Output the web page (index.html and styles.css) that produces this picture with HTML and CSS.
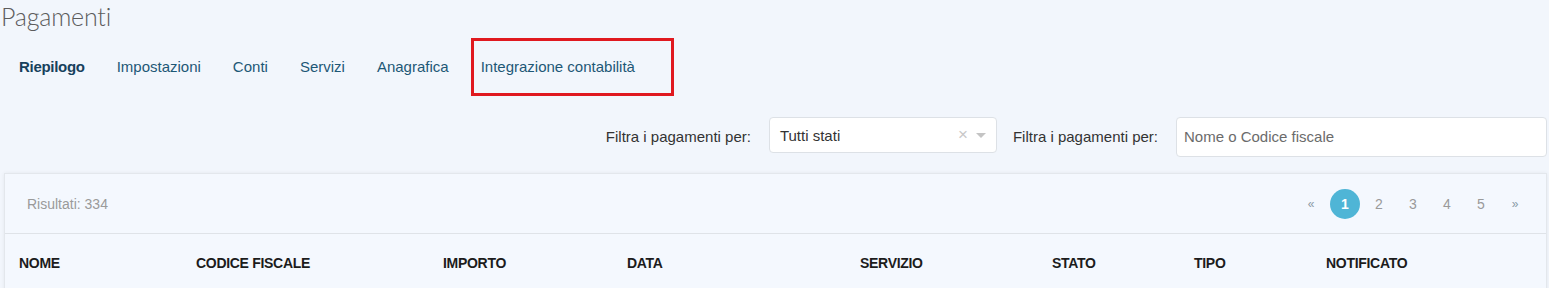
FILE: index.html
```html
<!DOCTYPE html>
<html lang="it">
<head>
<meta charset="utf-8">
<title>Pagamenti</title>
<link rel="stylesheet" href="styles.css">
</head>
<body>
<div class="page">
  <h1 class="title">Pagamenti</h1>
  <nav class="tabs">
    <a class="tab active">Riepilogo</a>
    <a class="tab">Impostazioni</a>
    <a class="tab">Conti</a>
    <a class="tab">Servizi</a>
    <a class="tab">Anagrafica</a>
    <a class="tab highlighted">Integrazione contabilità</a>
  </nav>
  <div class="filters">
    <label class="filter-label">Filtra i pagamenti per:</label>
    <div class="select">
      <span class="select-value">Tutti stati</span>
      <span class="select-clear">×</span>
      <span class="select-arrow"></span>
    </div>
    <label class="filter-label second">Filtra i pagamenti per:</label>
    <div class="input"><span class="placeholder">Nome o Codice fiscale</span></div>
  </div>
  <section class="card">
    <div class="card-head">
      <span class="results">Risultati: 334</span>
      <ul class="pager">
        <li class="arrow">«</li>
        <li class="current">1</li>
        <li>2</li>
        <li>3</li>
        <li>4</li>
        <li>5</li>
        <li class="arrow">»</li>
      </ul>
    </div>
    <table class="grid">
      <colgroup>
        <col class="c1"><col class="c2"><col class="c3"><col class="c4"><col class="c5"><col class="c6"><col class="c7"><col class="c8">
      </colgroup>
      <thead>
        <tr>
          <th>NOME</th><th>CODICE FISCALE</th><th>IMPORTO</th><th>DATA</th><th>SERVIZIO</th><th>STATO</th><th>TIPO</th><th>NOTIFICATO</th>
        </tr>
      </thead>
    </table>
  </section>
</div>
</body>
</html>
```
FILE: styles.css
```css
html, body {
  margin: 0;
  padding: 0;
  background: #f2f6fc;
  font-family: "Liberation Sans", Arial, sans-serif;
  color: #333;
}
.page {
  padding: 0 2px 0 3px;
}
.title {
  margin: 0 0 0 -2px;
  padding: 2px 0 0 0;
  height: 35px;
  font-family: Lato, "Liberation Sans", sans-serif;
  font-weight: 300;
  font-size: 25px;
  line-height: 28px;
  color: #5c5c5c;
  letter-spacing: -0.2px;
}
.tabs {
  display: flex;
  align-items: center;
  height: 60px;
}
.tab {
  font-size: 15px;
  color: #1e5876;
  padding: 0 16px;
  line-height: 20px;
}
.tab.active {
  font-weight: bold;
  color: #17415c;
  letter-spacing: -0.3px;
}
.tab.highlighted {
  margin-left: 6px;
  padding: 16px 36px 16px 7px;
  border: 3px solid #e0191f;
}
.filters {
  display: flex;
  justify-content: flex-end;
  align-items: center;
  margin-top: 20px;
  height: 39px;
}
.filter-label {
  font-size: 15px;
  color: #333;
  margin-right: 18px;
}
.filter-label.second {
  margin-left: 16px;
}
.select {
  box-sizing: border-box;
  width: 228px;
  height: 36px;
  background: #fff;
  border: 1px solid #dde1e6;
  border-radius: 4px;
  display: flex;
  align-items: center;
  padding: 0 10px;
  align-self: flex-start;
}
.select-value {
  flex: 1;
  font-size: 15px;
  color: #333;
}
.select-clear {
  color: #c8c8c8;
  font-size: 17px;
  margin-right: 8px;
}
.select-arrow {
  width: 0;
  height: 0;
  border-left: 5px solid transparent;
  border-right: 5px solid transparent;
  border-top: 5px solid #c4c4c4;
}
.input {
  box-sizing: border-box;
  width: 371px;
  height: 40px;
  background: #fff;
  border: 1px solid #dde1e6;
  border-radius: 4px;
  display: flex;
  align-items: center;
  padding: 0 7px;
}
.placeholder {
  font-size: 15px;
  color: #6b6b6b;
}
.card {
  margin: 17px 0 0 1px;
  background: #f4f8fe;
  border: 1px solid #e3e7ec;
  box-shadow: 0 0 4px rgba(0, 0, 0, 0.06);
}
.card-head {
  display: flex;
  justify-content: space-between;
  align-items: center;
  height: 58px;
  padding: 1px 16px 0 22px;
  border-bottom: 1px solid #dfe3e8;
}
.results {
  font-size: 14px;
  color: #9a9a9a;
}
.pager {
  display: flex;
  align-items: center;
  list-style: none;
  margin: 0;
  padding: 0;
  gap: 4px;
}
.pager li {
  width: 30px;
  height: 30px;
  border-radius: 50%;
  display: flex;
  align-items: center;
  justify-content: center;
  font-size: 14px;
  color: #9a9a9a;
}
.pager li.arrow {
  font-size: 12px;
  color: #8a9aa6;
}
.pager li.current {
  background: #4fb5d6;
  color: #fff;
  font-weight: bold;
}
.grid {
  width: 100%;
  border-collapse: collapse;
  table-layout: fixed;
}
.c1 { width: 177px; }
.c2 { width: 247px; }
.c3 { width: 184px; }
.c4 { width: 233px; }
.c5 { width: 192px; }
.c6 { width: 142px; }
.c7 { width: 132px; }
.grid th {
  text-align: left;
  font-size: 14px;
  font-weight: bold;
  color: #1c1c1c;
  padding: 19px 0 18px 14px;
  letter-spacing: -0.3px;
  height: 20px;
}
```
